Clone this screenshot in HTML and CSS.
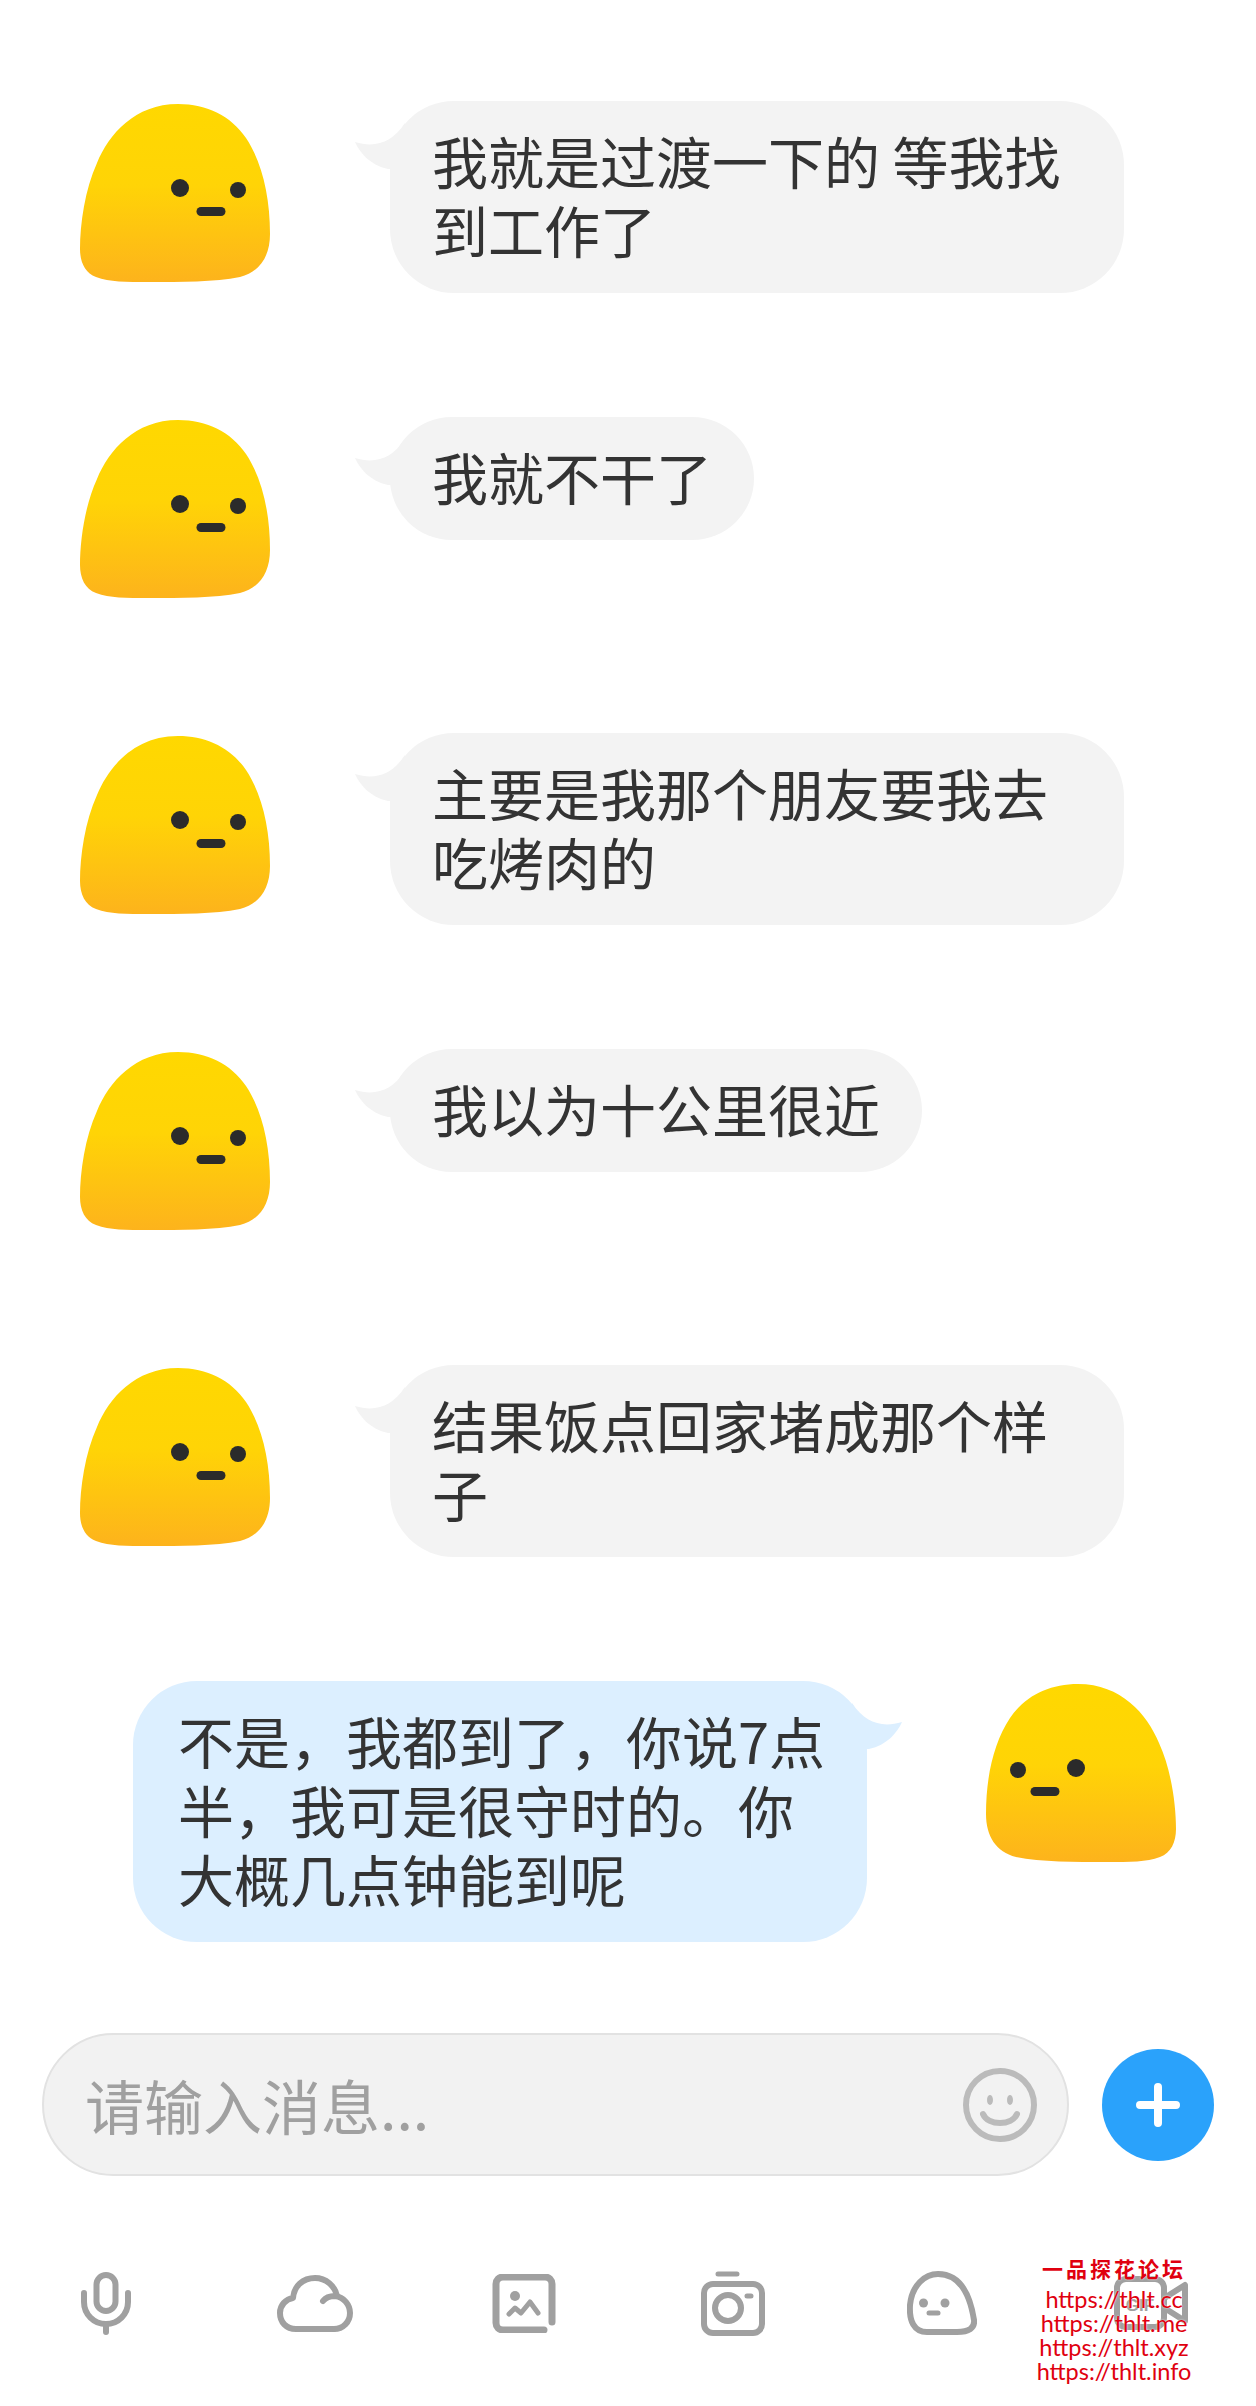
FILE: index.html
```html
<!DOCTYPE html>
<html lang="zh-CN">
  <head>
    <meta charset="utf-8">
    <title>聊天</title>
    <link rel="stylesheet" href="styles.css">
  </head>
  <body>
    <svg class="sprite" xmlns="http://www.w3.org/2000/svg">
      <defs>
        <linearGradient id="blobFill" x1="0" y1="0" x2="0" y2="1">
          <stop offset="0" stop-color="#ffd800"/>
          <stop offset=".45" stop-color="#ffd406"/>
          <stop offset="1" stop-color="#fdb31c"/>
        </linearGradient>
        <symbol id="blob" viewBox="0 0 190 178">
          <path fill="url(#blobFill)" d="M98 0C127 0 151 12 166 34C182 58 190 92 190 130C190 152 180 168 160 173C135 178 100 178 70 178C45 178 30 178 16 173C5 169 0 158 0 145C0 120 5 85 17 59C29 30 55 0 98 0Z"/>
          <circle cx="100" cy="84" r="9" fill="#2b2b2b"/>
          <circle cx="158" cy="86" r="8" fill="#2b2b2b"/>
          <path d="M121 107.500H141" stroke="#2b2b2b" stroke-width="9" stroke-linecap="round"/>
        </symbol>
      </defs>
    </svg>

    <main class="thread">
      <div class="row">
        <svg class="avatar"><use href="#blob"/></svg>
        <div class="bubble">
          <svg class="tail" viewBox="0 0 50 70"><path d="M0 41C20 47 37 42 50 22V68H33C15 64 5 52 0 41Z"/></svg>
          我就是过渡一下的 等我找到工作了
        </div>
      </div>
      <div class="row">
        <svg class="avatar"><use href="#blob"/></svg>
        <div class="bubble">
          <svg class="tail" viewBox="0 0 50 70"><path d="M0 41C20 47 37 42 50 22V68H33C15 64 5 52 0 41Z"/></svg>
          我就不干了
        </div>
      </div>
      <div class="row">
        <svg class="avatar"><use href="#blob"/></svg>
        <div class="bubble">
          <svg class="tail" viewBox="0 0 50 70"><path d="M0 41C20 47 37 42 50 22V68H33C15 64 5 52 0 41Z"/></svg>
          主要是我那个朋友要我去吃烤肉的
        </div>
      </div>
      <div class="row">
        <svg class="avatar"><use href="#blob"/></svg>
        <div class="bubble">
          <svg class="tail" viewBox="0 0 50 70"><path d="M0 41C20 47 37 42 50 22V68H33C15 64 5 52 0 41Z"/></svg>
          我以为十公里很近
        </div>
      </div>
      <div class="row">
        <svg class="avatar"><use href="#blob"/></svg>
        <div class="bubble">
          <svg class="tail" viewBox="0 0 50 70"><path d="M0 41C20 47 37 42 50 22V68H33C15 64 5 52 0 41Z"/></svg>
          结果饭点回家堵成那个样子
        </div>
      </div>
      <div class="row row-me">
        <div class="bubble bubble-me">
          <svg class="tail tail-me" viewBox="0 0 50 70"><path d="M0 41C20 47 37 42 50 22V68H33C15 64 5 52 0 41Z"/></svg>
          不是，我都到了，你说7点半，我可是很守时的。你大概几点钟能到呢
        </div>
        <svg class="avatar avatar-me"><use href="#blob"/></svg>
      </div>
    </main>

    <div class="composer">
      <div class="input">
        <span class="placeholder">请输入消息...</span>
        <svg class="smiley" viewBox="0 0 74 74">
          <circle cx="37" cy="37" r="34"/>
          <ellipse class="dot" cx="27" cy="32" rx="3" ry="5"/>
          <ellipse class="dot" cx="47" cy="32" rx="3" ry="5"/>
          <path d="M20 46C25 58 49 58 54 46"/>
        </svg>
      </div>
      <div class="send">
        <svg viewBox="0 0 44 44"><path d="M22 4V40M4 22H40"/></svg>
      </div>
    </div>

    <footer class="tools">
      <div class="tool">
        <svg width="50" height="63" viewBox="0 0 50 63">
          <rect x="15.500" y="3" width="19" height="36" rx="9.500"/>
          <path d="M3 21V30A22 22 0 0 0 47 30V21M25 52V60"/>
        </svg>
      </div>
      <div class="tool">
        <svg width="76" height="57" viewBox="0 0 76 57">
          <path d="M57 54H19C9 54 3 47 3 38C3 30 9 24 16 23C17 11 26 3 38 3C49 3 58 11 60 21"/>
          <path d="M46 26C49 22 54 21 58 21C67 22 73 30 73 38C73 47 66 54 57 54"/>
        </svg>
      </div>
      <div class="tool">
        <svg width="64" height="59" viewBox="0 0 64 59">
          <path class="thick" d="M60 48V10A7 7 0 0 0 53 3H11A7 7 0 0 0 4 10V49A7 7 0 0 0 11 56H52"/>
          <circle class="dot" cx="23" cy="22" r="5"/>
          <path class="thin" d="M17 40L23 34L29 39L38 28L46 39"/>
        </svg>
      </div>
      <div class="tool">
        <svg width="64" height="65" viewBox="0 0 64 65">
          <path class="thin" d="M17 3H36M46 25H50"/>
          <rect x="3" y="13" width="58" height="49" rx="9"/>
          <circle cx="27" cy="37" r="13"/>
        </svg>
      </div>
      <div class="tool">
        <svg width="70" height="64" viewBox="0 0 70 64">
          <path d="M31 3C18 3 5 14 3 34C2 50 7 61 20 61H50C62 61 68 57 67 49C64 30 56 3 31 3Z"/>
          <circle class="dot" cx="16.500" cy="32" r="4.500"/>
          <circle class="dot" cx="38" cy="32" r="4.500"/>
          <path class="thin" d="M22 42H31"/>
        </svg>
      </div>
      <div class="tool">
        <svg width="74" height="54" viewBox="0 0 74 54">
          <rect x="3" y="3" width="47" height="48" rx="9"/>
          <path d="M52 21L71 9V45L52 33"/>
          <text class="gif" x="26" y="35">GIF</text>
        </svg>
      </div>
    </footer>

    <div class="watermark">
      <div class="watermark-title">一品探花论坛</div>
      <div>https://thlt.cc</div>
      <div>https://thlt.me</div>
      <div>https://thlt.xyz</div>
      <div>https://thlt.info</div>
    </div>
  </body>
</html>
```

FILE: styles.css
```css
/* reset/general */
* { box-sizing: border-box; }
html, body { margin: 0; background: #fff; }
body {
  position: relative;
  width: 1256px;
  height: 2406px;
  overflow: hidden;
  font-family: "Noto Sans CJK SC", sans-serif;
  color: #333;
}
.sprite { position: absolute; width: 0; height: 0; }

/* messages */
.thread { display: flex; flex-direction: column; gap: 124px; padding: 101px 80px 0; }
.row { display: flex; align-items: flex-start; min-height: 192px; gap: 120px; }
.row-me { justify-content: flex-end; margin-left: -28px; gap: 119px; min-height: 0; }
.avatar { flex: none; width: 190px; height: 178px; margin-top: 3px; }
.avatar-me { transform: scaleX(-1); }

.bubble {
  position: relative;
  max-width: 734px;
  padding: 24px 42px 30px;
  background: #f3f3f3;
  border-radius: 64px;
  font-size: 56px;
  line-height: 69px;
}
.bubble-me { width: 734px; padding-left: 45px; padding-right: 36px; background: #dcefff; }
.tail { position: absolute; top: 0; left: -35px; width: 50px; height: 70px; fill: #f3f3f3; }
.tail-me { left: auto; right: -35px; fill: #dcefff; transform: scaleX(-1); }

/* input */
.composer { display: flex; align-items: center; gap: 33px; margin-top: 91px; padding: 0 42px; }
.input {
  display: flex;
  flex: none;
  align-items: center;
  justify-content: space-between;
  width: 1027px;
  height: 143px;
  padding: 0 30px 0 41px;
  background: #f2f2f2;
  border: 2px solid #e2e2e2;
  border-radius: 72px;
}
.placeholder { font-size: 59px; color: #a0a0a0; }
.smiley { width: 74px; height: 74px; fill: none; stroke: #bbb; stroke-width: 6; stroke-linecap: round; }
.smiley .dot { fill: #bbb; stroke: none; }
.send {
  display: flex;
  flex: none;
  align-items: center;
  justify-content: center;
  width: 112px;
  height: 112px;
  background: #2aa2fb;
  border-radius: 50%;
}
.send svg { width: 44px; height: 44px; fill: none; stroke: #fff; stroke-width: 8; stroke-linecap: round; }

/* toolbar */
.tools { display: grid; grid-template-columns: repeat(6, 209px); margin-top: 94px; padding-left: 1px; height: 66px; }
.tool { display: flex; align-items: center; justify-content: center; }
.tool svg { fill: none; stroke: #a0a0a0; stroke-width: 6; stroke-linecap: round; stroke-linejoin: round; }
.tool .thin { stroke-width: 5; }
.tool .thick { stroke-width: 7; }
.tool .dot { fill: #a0a0a0; stroke: none; }
.tool .gif { fill: #a0a0a0; stroke: none; font: bold 17px "Liberation Sans", sans-serif; text-anchor: middle; }

/* watermark sits over the last icon */
.watermark {
  position: absolute;
  top: 2256px;
  left: 1014px;
  width: 200px;
  font-family: Lato, sans-serif;
  font-size: 23.500px;
  line-height: 24px;
  text-align: center;
  color: #e0000f;
  text-shadow: 0 0 2px #fff;
}
.watermark-title {
  margin-bottom: 7px;
  font-family: "Noto Sans CJK SC", sans-serif;
  font-size: 21px;
  font-weight: 700;
  letter-spacing: 3px;
}
```
